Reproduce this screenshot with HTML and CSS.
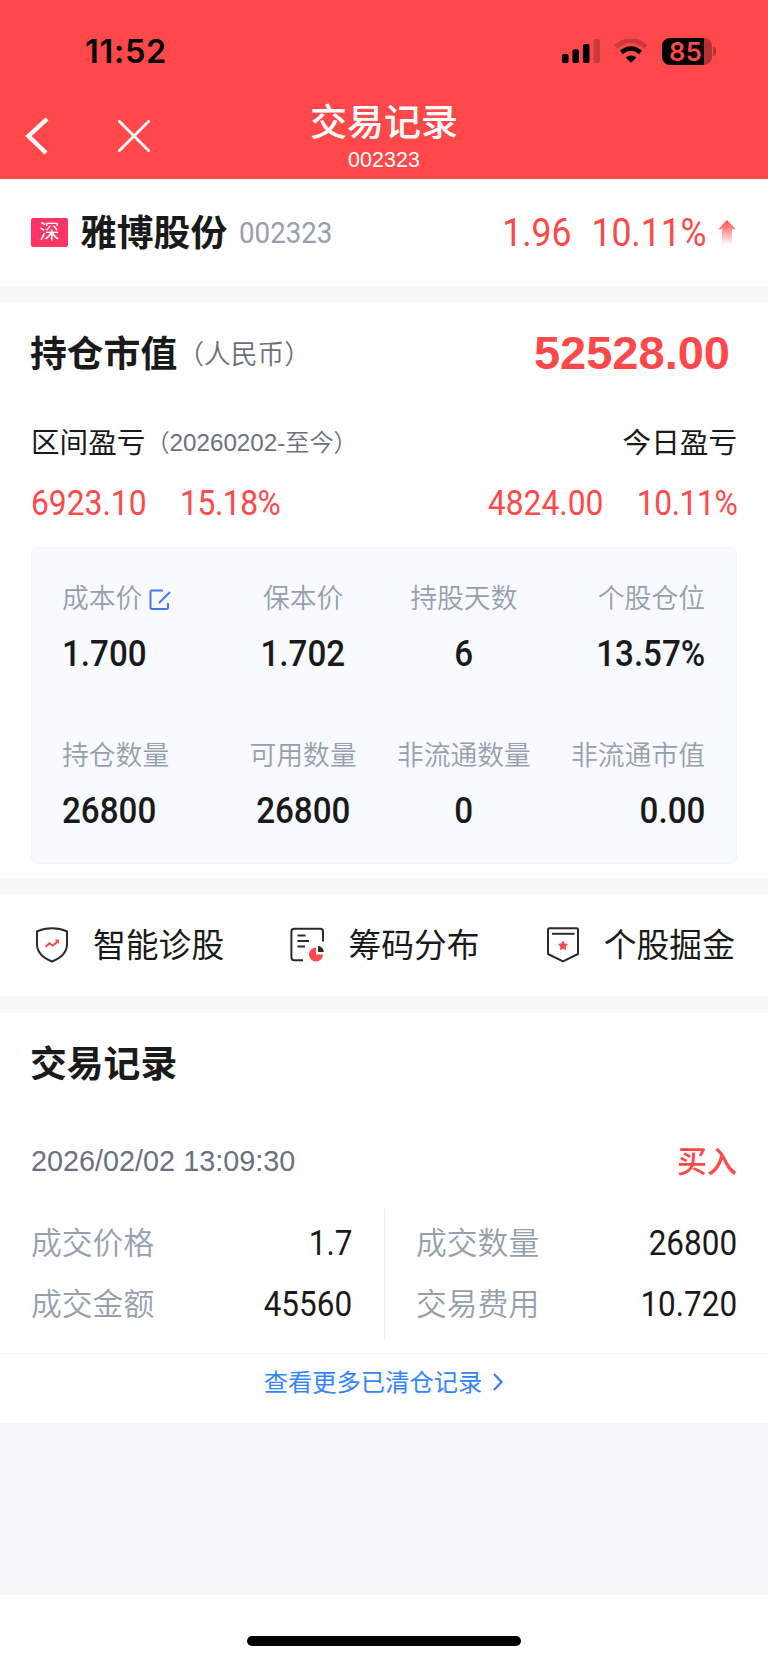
FILE: index.html
```html
<!DOCTYPE html>
<html lang="zh-CN">
<head>
    <meta charset="UTF-8">
    <meta name="viewport" content="width=device-width, initial-scale=1.0">
    <title>交易记录</title>
    <link rel="stylesheet" href="styles.css">
</head>
<body>

    <header class="header">
        <div class="status-bar">
            <span class="time">11:52</span>
            <div class="status-icons">
                <svg class="signal" width="39" height="24" viewBox="0 0 39 24">
                    <rect x="0" y="15" width="6.6" height="9" rx="2"/>
                    <rect x="10.4" y="10.3" width="6.6" height="13.7" rx="2"/>
                    <rect x="20.9" y="5" width="6.6" height="19" rx="2"/>
                    <rect x="31.4" y="0" width="6.6" height="24" rx="2" opacity="0.2"/>
                </svg>
                <svg class="wifi" width="34" height="24" viewBox="0 0 34 24">
                    <path d="M2 7.8 Q17 -5 32 7.8" fill="none" stroke="#000" stroke-width="5" opacity="0.2"/>
                    <path d="M7.4 13.4 Q17 5.6 26.6 13.4" fill="none" stroke="#000" stroke-width="4.6"/>
                    <path d="M17 23.8 L11.6 18.6 Q17 14.2 22.4 18.6 Z"/>
                </svg>
                <div class="battery">
                    <span class="battery-level">85</span>
                </div>
                <span class="battery-cap"></span>
            </div>
        </div>
        <nav class="nav">
            <div class="nav-left">
                <svg class="icon-back" width="25" height="38" viewBox="0 0 25 38">
                    <path d="M22 2 L3.5 19 L21 36" fill="none" stroke="#fff" stroke-width="4.4"/>
                </svg>
                <svg class="icon-close" width="32" height="32" viewBox="0 0 32 32">
                    <path d="M1.3 1.3 L30.7 30.7 M30.7 1.3 L1.3 30.7" fill="none" stroke="#fff" stroke-width="2.7" stroke-linecap="round"/>
                </svg>
            </div>
            <div class="nav-title">
                <h1>交易记录</h1>
                <p>002323</p>
            </div>
        </nav>
    </header>

    <section class="stock">
        <span class="market">深</span>
        <h2 class="heading">雅博股份</h2>
        <span class="code">002323</span>
        <div class="quote"><span class="price">1.96</span><span class="rate">10.11%</span></div>
        <svg class="icon-up" width="18" height="25" viewBox="0 0 18 25">
            <defs>
                <linearGradient id="fade" x1="0" y1="0" x2="0" y2="1">
                    <stop offset="0" stop-color="#ff484a"/>
                    <stop offset="1" stop-color="#ff484a" stop-opacity="0"/>
                </linearGradient>
            </defs>
            <path d="M9 0 L18 9.3 H14 V25 H4 V9.3 H0 Z" fill="url(#fade)"/>
        </svg>
    </section>

    <section class="holding">
        <div class="row row-total">
            <h2 class="heading">持仓市值<small>（人民币）</small></h2>
            <strong class="total">52528.00</strong>
        </div>
        <div class="row row-label">
            <span>区间盈亏<small>（20260202-至今）</small></span>
            <span>今日盈亏</span>
        </div>
        <div class="row row-profit">
            <div class="num"><span>6923.10</span><span>15.18%</span></div>
            <div class="num num-right"><span>4824.00</span><span>10.11%</span></div>
        </div>

        <div class="card">
            <div class="cell">
                <span class="label">成本价
                    <svg class="icon-edit" width="22" height="22" viewBox="0 0 22 22">
                        <path d="M14 1.5 H3 Q1.5 1.5 1.5 3 V18.5 Q1.5 20 3 20 H17.5 Q19 20 19 18.5 V14" fill="none" stroke="#4377fb" stroke-width="2"/>
                        <path d="M10 14 L21 3" stroke="#4377fb" stroke-width="2"/>
                    </svg>
                </span>
                <span class="value">1.700</span>
            </div>
            <div class="cell">
                <span class="label">保本价</span>
                <span class="value">1.702</span>
            </div>
            <div class="cell">
                <span class="label">持股天数</span>
                <span class="value">6</span>
            </div>
            <div class="cell">
                <span class="label">个股仓位</span>
                <span class="value">13.57%</span>
            </div>
            <div class="cell">
                <span class="label">持仓数量</span>
                <span class="value">26800</span>
            </div>
            <div class="cell">
                <span class="label">可用数量</span>
                <span class="value">26800</span>
            </div>
            <div class="cell">
                <span class="label">非流通数量</span>
                <span class="value">0</span>
            </div>
            <div class="cell">
                <span class="label">非流通市值</span>
                <span class="value">0.00</span>
            </div>
        </div>
    </section>

    <section class="tools">
        <div class="tool">
            <svg width="36" height="36" viewBox="0 0 36 36">
                <path d="M18 1.2 Q26 1.2 33 4.4 V17 C33 26 27 31 18 34.5 C9 31 3 26 3 17 V4.4 Q10 1.2 18 1.2 Z" fill="none" stroke="#2b2b2b" stroke-width="2" stroke-linejoin="round"/>
                <path d="M11.8 19.8 L15.5 16.3 L18.8 18.6 L23.8 14.2" fill="none" stroke="#ff484a" stroke-width="2"/>
                <path d="M20.8 12.6 L25.4 12.8 L24.4 17 Z" fill="#ff484a"/>
            </svg>
            <span>智能诊股</span>
        </div>
        <div class="tool">
            <svg width="36" height="36" viewBox="0 0 36 36">
                <path d="M34 14.5 V4.5 Q34 1.7 31.2 1.7 H5.2 Q2.4 1.7 2.4 4.5 V30 Q2.4 33.2 5.2 33.2 H14" fill="none" stroke="#2b2b2b" stroke-width="2"/>
                <path d="M8.5 8.4 H16.5 M8.5 14 H20 M8.5 19.4 H16" stroke="#2b2b2b" stroke-width="2"/>
                <path d="M27 20.5 V27.5 H34 A7 7 0 1 1 27 20.5 Z" fill="#ff484a"/>
                <path d="M29 19 A6 6 0 0 1 34.8 25 H29 Z" fill="#2b2b2b"/>
            </svg>
            <span>筹码分布</span>
        </div>
        <div class="tool">
            <svg width="36" height="36" viewBox="0 0 36 36">
                <path d="M4.5 1.3 H31.5 Q33 1.3 33 2.8 V27 L18 34.3 L3 27 V2.8 Q3 1.3 4.5 1.3 Z" fill="none" stroke="#2b2b2b" stroke-width="2" stroke-linejoin="round"/>
                <path d="M7 6.8 H29.5" stroke="#2b2b2b" stroke-width="2"/>
                <path d="M18 13.2 L19.6 16.5 L23 17 L20.7 19.6 L21.2 23.2 L18 21.6 L14.8 23.2 L15.3 19.6 L13 17 L16.4 16.5 Z" fill="#ff484a"/>
            </svg>
            <span>个股掘金</span>
        </div>
    </section>

    <section class="records">
        <h2 class="heading">交易记录</h2>
        <div class="row record-head">
            <time>2026/02/02 13:09:30</time>
            <span class="side">买入</span>
        </div>
        <div class="record-body">
            <dl>
                <div><dt>成交价格</dt><dd>1.7</dd></div>
                <div><dt>成交金额</dt><dd>45560</dd></div>
            </dl>
            <dl>
                <div><dt>成交数量</dt><dd>26800</dd></div>
                <div><dt>交易费用</dt><dd>10.720</dd></div>
            </dl>
        </div>
        <a class="more"><span>查看更多已清仓记录</span>
            <svg width="12" height="20" viewBox="0 0 12 20">
                <path d="M2 2 L9.5 10 L2 18" fill="none" stroke="#4377fb" stroke-width="2.2"/>
            </svg>
        </a>
    </section>

    <footer class="home-bar"><span></span></footer>

</body>
</html>
```

FILE: styles.css
```css
* {
    box-sizing: border-box;
    margin: 0;
    padding: 0;
}

body {
    font-family: "Liberation Sans", "Noto Sans CJK SC", sans-serif;
    width: 768px;
    min-height: 1663px;
    display: flex;
    flex-direction: column;
    background-color: #f6f8fa;
    color: #1a1a1a;
    white-space: nowrap;
}

svg {
    display: block;
    flex: none;
}

section {
    background-color: #fff;
}

/* ---------- header ---------- */

.header {
    height: 179px;
    background-color: #ff484a;
}

.status-bar {
    height: 102px;
    padding: 0 52px 0 85px;
    display: flex;
    justify-content: space-between;
    align-items: center;
}

.time {
    font-family: Inter, sans-serif;
    font-size: 32.5px;
    font-weight: 600;
    letter-spacing: 0.7px;
    color: #000;
}

.status-icons {
    display: flex;
    align-items: center;
}

.wifi {
    margin: 0 14px 0 13px;
}

.battery {
    width: 50px;
    height: 27px;
    padding-left: 7px;
    border-radius: 8px;
    background: linear-gradient(to right, #000 42px, #b33335 42px);
}

.battery-level {
    font-family: Inter, sans-serif;
    font-size: 25.5px;
    font-weight: 600;
    letter-spacing: 0.5px;
    line-height: 28px;
    color: #ff484a;
}

.battery-cap {
    width: 3px;
    height: 9px;
    margin-left: 1px;
    border-radius: 0 4px 4px 0;
    background-color: #b33335;
}

.nav {
    height: 77px;
    display: grid;
    grid-template-columns: 1fr auto 1fr;
}

.nav-left {
    height: 68px;
    padding-left: 25px;
    display: flex;
    align-items: center;
    gap: 68px;
}

.nav-title {
    text-align: center;
    color: #fff;
}

.nav-title h1 {
    font-size: 37px;
    font-weight: 500;
    line-height: 38px;
    padding-top: 3px;
}

.nav-title p {
    font-size: 21.4px;
    letter-spacing: 0.1px;
    line-height: 24px;
    margin-top: 5px;
}

/* ---------- stock ---------- */

.heading {
    font-size: 36.8px;
    font-weight: 700;
}

.stock {
    height: 107px;
    padding: 0 32px 0 31px;
    display: flex;
    align-items: center;
}

.market {
    width: 37px;
    height: 29px;
    border-radius: 2px;
    background-color: #ff3366;
    color: #fff;
    font-size: 20px;
    line-height: 29px;
    text-align: center;
}

.stock .heading {
    margin-left: 12px;
    padding-bottom: 5px;
}

/* digits are squeezed to get the narrow figures */
.code,
.quote,
.num,
.value,
dd {
    font-family: Roboto, sans-serif;
    transform: scaleX(0.93);
    transform-origin: left;
}

.code {
    margin-left: 12px;
    font-size: 29.8px;
    color: #969fae;
}

.quote {
    margin-left: auto;
    margin-right: 11px;
    font-size: 39px;
    color: #ff484a;
    transform: scaleX(0.91);
    transform-origin: right;
}

.rate {
    margin-left: 22px;
}

/* ---------- holding ---------- */

.holding {
    height: 576px;
    margin-top: 16px;
    padding: 0 31px;
}

.row {
    display: flex;
    justify-content: space-between;
    align-items: center;
}

.row-total {
    height: 101px;
}

.row-total .heading {
    padding-bottom: 3px;
    margin-left: -1px;
}

small {
    font-weight: 350;
    color: #6b7080;
}

.heading small {
    font-size: 26.8px;
    vertical-align: 3px;
}

.total {
    font-size: 47px;
    color: #ff484a;
    margin-right: 7px;
}

.row-label {
    height: 74px;
    font-size: 28.6px;
}

.row-label small {
    font-size: 24.2px;
    vertical-align: 2px;
}

.row-profit {
    height: 42px;
    margin-top: 5px;
    color: #ff484a;
}

.num {
    font-size: 34.2px;
}

.num span + span {
    margin-left: 36px;
    letter-spacing: -0.5px;
}

.num-right {
    transform-origin: right;
}

.card {
    height: 317px;
    margin-top: 23px;
    padding: 29px 31px 0 30px;
    display: grid;
    grid-template-columns: repeat(4, 1fr);
    grid-auto-rows: 157.4px;
    border: 1px solid #f2f4f9;
    border-radius: 7px;
    background-color: #f9faff;
}

.cell {
    display: flex;
    flex-direction: column;
    align-items: center;
}

.cell:nth-child(4n + 1) {
    align-items: flex-start;
}

.cell:nth-child(4n) {
    align-items: flex-end;
}

.label {
    display: flex;
    align-items: center;
    gap: 7px;
    font-size: 26.8px;
    font-weight: 350;
    line-height: 45px;
    color: #969fae;
}

.value {
    font-size: 37.5px;
    font-weight: 500;
    line-height: 44px;
    margin-top: 9px;
    transform: scaleX(0.885);
    transform-origin: center;
}

.cell:nth-child(4n + 1) .value {
    transform-origin: left;
}

.cell:nth-child(4n) .value {
    transform-origin: right;
}

/* ---------- tools ---------- */

.tools {
    height: 102px;
    margin-top: 16px;
    padding-left: 34px;
    display: grid;
    grid-template-columns: repeat(3, 255.4px);
}

.tool {
    display: flex;
    align-items: center;
    gap: 23px;
    font-size: 32.8px;
}

.tool span {
    padding-bottom: 5px;
}

/* ---------- records ---------- */

.records {
    height: 410px;
    margin-top: 17px;
}

.records .heading {
    height: 100px;
    padding-left: 30px;
    line-height: 104px;
}

.record-head {
    height: 96px;
    padding: 0 31px;
}

.record-head time {
    font-size: 28.8px;
    color: #6b7080;
}

.side {
    padding-bottom: 5px;
    font-size: 30px;
    font-weight: 500;
    color: #ff484a;
}

.record-body {
    height: 145px;
    display: grid;
    grid-template-columns: 1fr 1fr;
    border-bottom: 1px solid #f3f5f7;
}

dl {
    height: 130px;
    padding: 3px 32px 0 31px;
}

dl + dl {
    padding-right: 31px;
    border-left: 1px solid #eceff7;
}

dl div {
    height: 61px;
    display: flex;
    justify-content: space-between;
    align-items: center;
}

dt {
    padding-bottom: 5px;
    font-size: 30.8px;
    font-weight: 350;
    color: #969fae;
}

dd {
    font-size: 34.2px;
    transform: scaleX(0.92);
    transform-origin: right;
}

.more {
    height: 56px;
    display: flex;
    justify-content: center;
    align-items: center;
    gap: 10px;
    font-size: 24.3px;
    color: #3385ff;
}

.more span {
    padding-bottom: 4px;
}

/* ---------- home bar ---------- */

.home-bar {
    height: 68px;
    margin-top: auto;
    padding-top: 41px;
    background-color: #fff;
}

.home-bar span {
    display: block;
    width: 274px;
    height: 10px;
    margin: 0 auto;
    border-radius: 5px;
    background-color: #000;
}
```
